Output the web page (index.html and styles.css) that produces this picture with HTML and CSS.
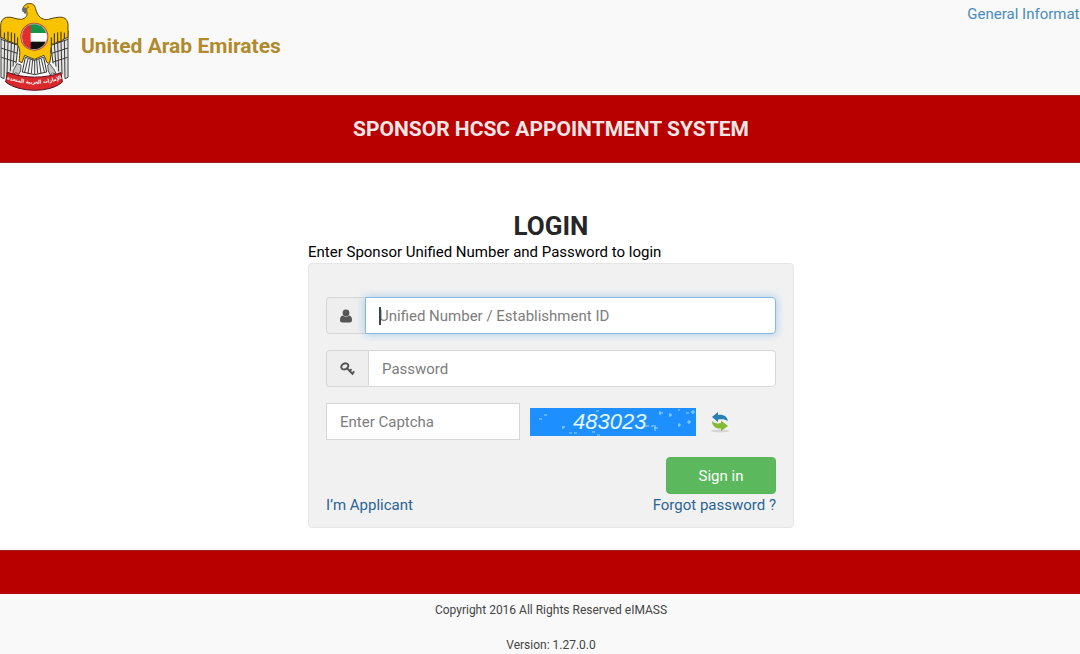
FILE: index.html
```html
<!DOCTYPE html>
<html lang="en">
<head>
  <meta charset="UTF-8" />
  <meta name="viewport" content="width=device-width, initial-scale=1.0"/>
  <title>Sponsor HCSC Appointment System</title>
  <link rel="stylesheet" href="styles.css">
</head>
<body>
<div class="page">

  <header class="top">
    <div class="brand">
      <svg class="emblem" viewBox="0 0 207 276" role="img" aria-label="UAE emblem">
        <!-- wings -->
        <path d="M3 92 L4 232 L12 236 L20 226 L34 222 L38 200 L50 190 L58 140 H150 L158 190 L168 200 L172 222 L186 226 L195 236 L203 232 L204 92 Z" fill="#e2e2e0"/>
        <g fill="none" stroke="#3b3b3b" stroke-width="3">
          <path d="M3 92 V232 L12 236 L14 120 M24 126 L21 222 M34 128 L31 214 M44 132 L39 200 M54 138 L48 190"/>
          <path d="M204 92 V232 L195 236 L193 120 M183 126 L186 222 M173 128 L176 214 M163 132 L168 200 M153 138 L159 190"/>
          <path d="M3 118 L54 136 M3 144 L52 160 M4 172 L48 186 M204 118 L153 136 M204 144 L155 160 M203 172 L159 186"/>
        </g>
        <!-- body and head -->
        <path d="M68 29 C70 14 82 9 94 11 C107 14 106 28 111 39 C118 53 130 61 145 58 C160 54 175 50 187 52 C199 54 205 66 204 80 V112 L193 116 L183 124 L172 126 L162 132 L154 132 C155 142 149 154 153 164 L149 190 L141 188 L132 166 L103 178 L74 166 L66 188 L57 184 C58 172 61 162 58 146 L52 132 L42 130 L34 126 L24 124 L13 116 L2 112 V82 C1 66 7 55 20 52 C34 49 47 58 62 58 C78 57 84 45 80 34 L75 40 Z" fill="#f8c300" stroke="#55400c" stroke-width="3"/>
        <path d="M67 27 C70 22 77 21 83 25 L80 35 L75 43 C75 36 70 36 67 35 Z" fill="#6c6c68"/>
        <circle cx="84" cy="21" r="2" fill="#222"/>
        <path d="M13 98 V118 M24 95 V124 M34 97 V127 M44 100 V131 M53 112 V132 M193 98 V118 M183 95 V124 M173 97 V127 M163 100 V131 M154 112 V132" stroke="#33290c" stroke-width="3"/>
        <!-- tail -->
        <path d="M76 172 L67 216 L104 224 L140 216 L131 172 L103 181 Z" fill="#f3f3f3" stroke="#333" stroke-width="3"/>
        <path d="M84 177 L74 216 M91 178 L84 220 M98 180 L94 220 M104 180 V222 M110 180 L113 220 M117 178 L123 220 M124 177 L133 216" stroke="#444" stroke-width="3"/>
        <!-- shield -->
        <clipPath id="disc"><circle cx="103" cy="110" r="37"/></clipPath>
        <circle cx="103" cy="110" r="42" fill="#c9332d"/>
        <circle cx="103" cy="110" r="39" fill="#ddd" stroke="#999" stroke-width="2"/>
        <g clip-path="url(#disc)">
          <rect x="60" y="70" width="86" height="30" fill="#159447"/>
          <rect x="60" y="99" width="86" height="27" fill="#fff"/>
          <rect x="60" y="125" width="86" height="26" fill="#111"/>
          <rect x="60" y="70" width="32" height="82" fill="#e32c2c"/>
        </g>
        <!-- claws -->
        <path d="M51 191 L40 211 L38 224 L48 218 L55 224 L62 213 L63 195 Z M149 191 L163 210 L169 223 L158 219 L151 225 L145 213 L143 195 Z" fill="#c8c8c8" stroke="#555" stroke-width="3"/>
        <!-- ribbon -->
        <path d="M22 217 C70 236 136 236 183 218 L187 246 C152 279 58 279 17 246 Z" fill="#d9292b" stroke="#512" stroke-width="3"/>
        <path id="scroll" d="M5 231 Q103 272 201 231" fill="none"/>
        <text class="scroll-text"><textPath href="#scroll" startOffset="50%">الإمارات العربية المتحدة</textPath></text>
      </svg>
      <span class="country">United Arab Emirates</span>
    </div>
    <a class="info-link" href="#">General Information</a>
  </header>

  <div class="title-bar">
    <h1>SPONSOR HCSC APPOINTMENT SYSTEM</h1>
  </div>

  <main class="container">
    <h2>LOGIN</h2>
    <p class="hint">Enter Sponsor Unified Number and Password to login</p>

    <form class="well">
      <div class="input-group focused">
        <label class="addon" for="username" aria-label="Unified Number">
          <svg class="icon-user" viewBox="0 0 12 14">
            <circle cx="6" cy="4" r="3.4"/>
            <path d="M2.8 6.6 Q6 9.3 9.2 6.6 Q12 7.3 12 11.2 Q12 13.5 9.8 13.5 H2.2 Q0 13.5 0 11.2 Q0 7.3 2.8 6.6 Z"/>
          </svg>
        </label>
        <input class="form-control" id="username" type="text" placeholder="Unified Number / Establishment ID">
        <span class="caret"></span>
      </div>

      <div class="input-group">
        <label class="addon" for="password" aria-label="Password">
          <svg class="icon-key" viewBox="0 0 15 14">
            <ellipse cx="4.8" cy="4.4" rx="3.7" ry="2.8" transform="rotate(-28 4.8 4.4)"/>
            <path d="M6.8 6 L13.2 12.6 M9.5 8.8 L11.6 7.2 M12 11.6 L14.3 9.4"/>
          </svg>
        </label>
        <input class="form-control" id="password" type="password" placeholder="Password">
      </div>

      <div class="captcha-row">
        <input class="form-control captcha-input" type="text" placeholder="Enter Captcha" aria-label="Enter Captcha">
        <svg class="captcha" viewBox="0 0 166 28" role="img" aria-label="Captcha">
          <rect width="166" height="28" fill="#1e8fff"/>
          <path d="M9 11h3M14 7h3M32 19h3M33 18v3M39 25h3M44 25h3M66 3h3M67 27h3M115 18h4M121 18h3M125 17v6M124 20h4M129 5h4M130 3v4M139 7h3M140 5v4M148 17h3M149 15v4M157 14h4M159 12v4M156 5h3M161 4h4M163 2v4M148 2h2M62 24h3M86 19h3" stroke="#b5ecff" stroke-width="1" opacity=".8"/>
          <text class="captcha-text" x="43" y="21">483023</text>
        </svg>
        <button class="refresh" type="button" aria-label="Refresh captcha">
          <svg viewBox="0 0 20 22">
            <ellipse cx="10" cy="20" rx="9" ry="1.5" fill="#d5d5d5"/>
            <path d="M2 6 L8 1 V4 C13 3 17 5 18 10 C15 8 12 8 8 8.5 V11 Z" fill="#2a7fb5"/>
            <path d="M18 15 L11 9.5 V12 C7 13 4 12 2 10 C2 15 6 18 11 17.5 V20 Z" fill="#86ba34"/>
          </svg>
        </button>
      </div>

      <div class="actions">
        <button class="btn" type="submit">Sign in</button>
      </div>
      <div class="links">
        <a href="#">I’m Applicant</a>
        <a href="#">Forgot password ?</a>
      </div>
    </form>
  </main>

  <footer>
    <div class="footer-bar"></div>
    <p>Copyright 2016 All Rights Reserved eIMASS</p>
    <p>Version: 1.27.0.0</p>
  </footer>

</div>
</body>
</html>
```
FILE: styles.css
```css
* {
  box-sizing: border-box;
}

body {
  font-family: Roboto, sans-serif;
  font-size: 15px;
  line-height: 22px;
  color: #000;
  background-color: #fff;
  margin: 0;
  overflow: hidden;
}

h1, h2, p {
  margin: 0;
}

a {
  color: #2a6496;
  text-decoration: none;
}

/* the page runs a little wider than the window */
.page {
  margin-right: -22px;
}

.top {
  display: flex;
  justify-content: space-between;
  align-items: flex-start;
  padding: 0 2px 3px 0;
  background-color: #f9f9f9;
}

.brand {
  display: flex;
  align-items: center;
  gap: 12px;
}

.emblem {
  width: 69px;
  height: 92px;
}

.scroll-text {
  font-family: "DejaVu Sans Condensed", "DejaVu Sans", sans-serif;
  font-size: 16px;
  font-weight: bold;
  fill: #fff;
  text-anchor: middle;
}

.country {
  font-size: 21px;
  font-weight: 700;
  color: #b08a2c;
}

.info-link {
  padding-top: 3px;
  color: #4a8bbf;
}

.title-bar {
  padding: 22px 0;
  background-color: #b90000;
  border-top: 1px solid #9c2020;
  border-bottom: 1px solid #9c2020;
  text-align: center;
}

h1 {
  font-size: 21px;
  line-height: 22px;
  font-weight: 700;
  color: #f3e6e6;
}

.container {
  max-width: 486px;
  margin: 0 auto;
  padding: 48px 0 22px;
}

h2 {
  font-size: 26px;
  line-height: 30px;
  font-weight: 700;
  color: #262626;
  text-align: center;
}

.well {
  padding: 33px 17px 11px;
  background-color: #f1f1f1;
  border: 1px solid #e6e6e6;
  border-radius: 4px;
}

.input-group {
  display: flex;
  position: relative;
  margin-bottom: 16px;
}

.addon {
  display: flex;
  align-items: center;
  padding: 0 13px;
  background-color: #eee;
  border: 1px solid #d6d6d6;
  border-right: 0;
  border-radius: 4px 0 0 4px;
}

.icon-user {
  width: 12px;
  height: 14px;
  fill: #555;
}

.icon-key {
  width: 15px;
  height: 14px;
  fill: none;
  stroke: #555;
  stroke-width: 2;
}

.form-control {
  flex: 1;
  min-width: 0;
  height: 37px;
  padding: 0 13px;
  font-family: inherit;
  font-size: 15px;
  color: #555;
  background-color: #fff;
  border: 1px solid #d6d6d6;
  border-radius: 0 4px 4px 0;
  outline: 0;
}

.form-control::placeholder {
  color: #7d7d7d;
}

.focused .form-control {
  border-color: #86b9de;
  box-shadow: 0 0 8px rgba(102, 175, 233, 0.6);
}

.caret {
  position: absolute;
  left: 53px;
  top: 10px;
  width: 2px;
  height: 18px;
  background-color: #444;
}

.captcha-row {
  display: flex;
  align-items: center;
  margin-bottom: 17px;
}

.captcha-input {
  flex: 0 0 43%;
  border-radius: 0;
}

.captcha {
  width: 166px;
  height: 28px;
  margin: 0 14px 0 10px;
}

.captcha-text {
  font-family: "Liberation Sans", sans-serif;
  font-size: 22px;
  font-style: italic;
  fill: #e4f8ff;
}

.refresh {
  padding: 0;
  background: none;
  border: 0;
  cursor: pointer;
}

.refresh svg {
  display: block;
  width: 20px;
  height: 22px;
}

.actions {
  text-align: right;
}

.btn {
  display: inline-block;
  vertical-align: top;
  width: 110px;
  height: 37px;
  font-family: inherit;
  font-size: 15px;
  color: #fff;
  background-color: #5cb85c;
  border: 1px solid #58b458;
  border-radius: 4px;
}

.links {
  display: flex;
  justify-content: space-between;
}

footer {
  background-color: #f9f9f9;
  font-size: 12px;
  line-height: 17px;
  color: #444;
  text-align: center;
}

.footer-bar {
  height: 44px;
  margin-bottom: 8px;
  background-color: #b90000;
  border-top: 1px solid #9c2020;
}

footer p {
  margin-bottom: 18px;
}
```
